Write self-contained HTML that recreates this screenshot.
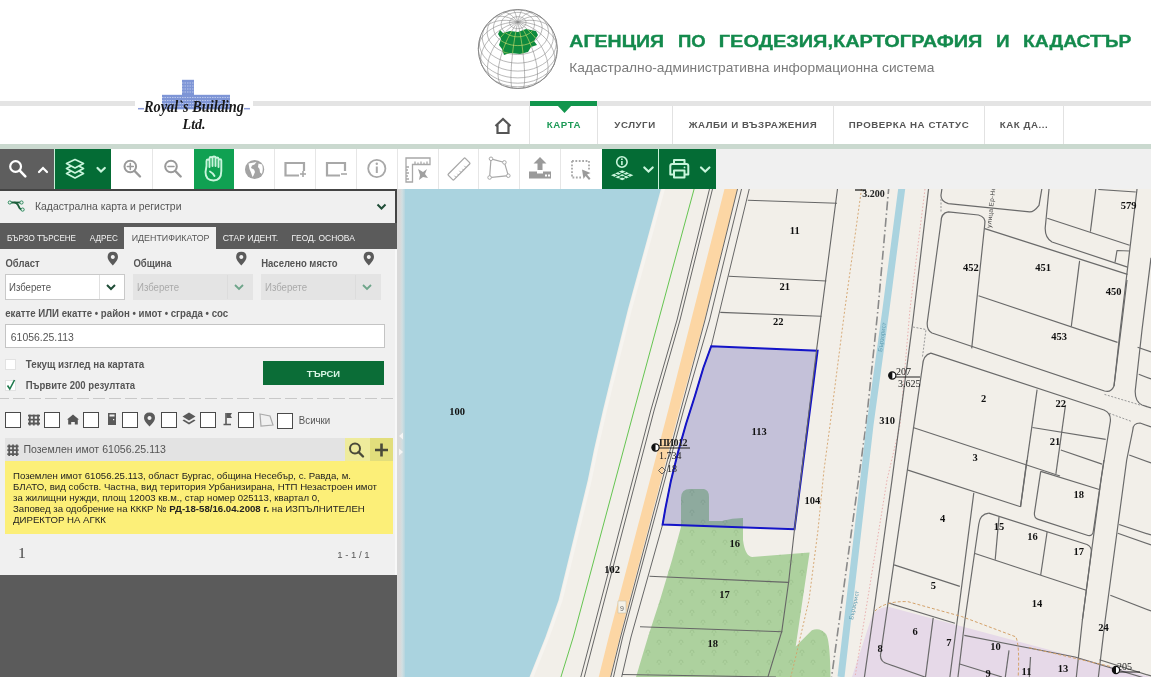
<!DOCTYPE html>
<html><head><meta charset="utf-8">
<style>
*{margin:0;padding:0;box-sizing:border-box}
html,body{width:1151px;height:677px;overflow:hidden;background:#fff;font-family:"Liberation Sans",sans-serif;position:relative}
.abs{position:absolute}
body>*{will-change:transform}
#hdrline{left:0;top:101px;width:1151px;height:5px;background:#e4e4e4}
#navline{left:0;top:144px;width:1151px;height:5px;background:#cad9cf}
#tbbg{left:0;top:149px;width:1151px;height:40px;background:#f0f0f0}
.nav{position:absolute;top:106px;height:38px;background:#fff;border-left:1px solid #e2e2e2;font-weight:bold;font-size:9.7px;letter-spacing:0.55px;color:#555;line-height:38px;text-align:center;white-space:nowrap}
.tb{position:absolute;top:149px;height:40px;background:#fff;border-right:1px solid #e4e4e4}
#panel{left:0;top:189px;width:397px;height:488px;background:#f0f0f0}
.lbl{position:absolute;font-weight:bold;font-size:9.5px;color:#555}
.sel{position:absolute;top:274px;width:120px;height:26px;border:1px solid #c9c9c9;background:#fff;font-size:9.5px;color:#555;line-height:24px;padding-left:3px}
.sel.dis{background:#e4e4e4;border-color:#e4e4e4;color:#aaa}
.sel .dv{position:absolute;right:24px;top:0;width:1px;height:24px;background:#e0e0e0}
.sel.dis .dv{background:#dcdcdc}
.cb{position:absolute;width:16px;height:16px;border:1px solid #4a4a4a;background:#fff}
.ytxt{font-size:9.5px;line-height:11.3px;color:#222}
</style></head><body>
<!-- header -->
<div class="abs" id="hdrline"></div>
<div class="abs" id="navline"></div>
<div class="abs" id="tbbg"></div>

<!-- Royal's logo -->
<div class="abs" style="left:135px;top:78px;width:118px;height:58px;background:#fff"></div>
<svg class="abs" style="left:130px;top:75px" width="130" height="62" viewBox="0 0 130 62">
  <rect x="52" y="4.8" width="12" height="15.2" fill="#7e95d6"/>
  <rect x="32" y="19.8" width="68" height="14.5" fill="#7e95d6"/>
  <g stroke="#d4dcf4" stroke-width="0.7" stroke-dasharray="1.5 1">
    <line x1="32" y1="22.5" x2="100" y2="22.5"/><line x1="32" y1="25.5" x2="100" y2="25.5"/><line x1="32" y1="28.5" x2="100" y2="28.5"/><line x1="32" y1="31.5" x2="100" y2="31.5"/>
    <line x1="52" y1="8" x2="64" y2="8"/><line x1="52" y1="11" x2="64" y2="11"/><line x1="52" y1="14" x2="64" y2="14"/><line x1="52" y1="17" x2="64" y2="17"/>
  </g>
  <line x1="8" y1="33.7" x2="14" y2="33.7" stroke="#8a9ad8" stroke-width="1.5"/>
  <line x1="114" y1="33.7" x2="120" y2="33.7" stroke="#8a9ad8" stroke-width="1.5"/>
  <text x="14" y="37.4" font-family="Liberation Serif" font-style="italic" font-weight="bold" font-size="16.5" fill="#1a1a1a" textLength="100" lengthAdjust="spacingAndGlyphs">Royal`s Building</text>
  <text x="52.6" y="54.3" font-family="Liberation Serif" font-style="italic" font-weight="bold" font-size="15" fill="#1a1a1a" textLength="23" lengthAdjust="spacingAndGlyphs">Ltd.</text>
</svg>

<!-- AGKK logo -->
<svg class="abs" style="left:476px;top:7px" width="84" height="84" viewBox="0 0 84 84">
  <defs><clipPath id="bgc"><path d="M24 23 L27 26 L34 24 L42 25 L50 22 L60 24 L62 28 L58 34 L61 38 L55 40 L52 45 L44 47 L34 46 L28 48 L26 42 L23 38 L25 32 L22 27 Z"/></clipPath></defs>
  <circle cx="41.799999999999955" cy="42" r="39.5" fill="#fff" stroke="#777" stroke-width="0.9"/>
  <path d="M46.9 81.2L47.3 80.9L47.7 80.1L48.1 78.9L48.3 77.4L48.5 75.4L48.6 73.1L48.7 70.4L48.6 67.5L48.5 64.2L48.3 60.7L48.1 57.0L47.7 53.2L47.3 49.2L46.9 45.1L46.4 41.0L45.8 36.9L45.2 32.9L44.6 29.0L43.9 25.2L43.2 21.6L42.5 18.2L41.8 15.1 M57.8 78.1L58.9 77.1L59.8 75.8L60.6 74.1L61.1 72.1L61.4 69.7L61.5 67.0L61.4 64.1L61.1 60.9L60.6 57.5L59.8 53.9L58.9 50.2L57.8 46.4L56.5 42.6L55.0 38.7L53.4 34.9L51.7 31.2L49.8 27.6L47.9 24.1L45.9 20.9L43.9 17.8L41.8 15.1 M68.0 71.6L69.4 69.9L70.6 68.0L71.4 65.8L71.9 63.3L72.1 60.6L71.9 57.7L71.4 54.6L70.6 51.3L69.4 48.0L68.0 44.6L66.3 41.2L64.3 37.8L62.0 34.4L59.6 31.1L56.9 28.0L54.1 24.9L51.2 22.1L48.1 19.5L45.0 17.1L41.8 15.1 M77.1 59.7L78.1 57.3L78.7 54.6L78.9 51.9L78.7 49.0L78.1 46.1L77.1 43.1L75.7 40.1L73.9 37.1L71.8 34.2L69.4 31.3L66.6 28.6L63.6 26.0L60.4 23.6L56.9 21.4L53.3 19.4L49.5 17.7L45.7 16.2L41.8 15.1 M81.3 42.0L81.1 39.2L80.4 36.4L79.4 33.7L77.9 31.0L76.0 28.5L73.8 26.2L71.2 24.0L68.2 22.0L65.0 20.2L61.5 18.7L57.9 17.4L54.0 16.4L50.0 15.6L45.9 15.2L41.8 15.1 M77.1 24.3L75.7 22.0L73.9 20.0L71.8 18.2L69.4 16.6L66.6 15.4L63.6 14.4L60.4 13.7L56.9 13.4L53.3 13.3L49.5 13.6L45.7 14.2L41.8 15.1 M66.3 11.1L64.3 10.2L62.0 9.6L59.6 9.3L56.9 9.4L54.1 9.8L51.2 10.6L48.1 11.8L45.0 13.3L41.8 15.1 M56.5 5.4L55.0 5.2L53.4 5.5L51.7 6.2L49.8 7.2L47.9 8.6L45.9 10.4L43.9 12.6L41.8 15.1 M46.4 2.9L45.8 3.5L45.2 4.4L44.6 5.8L43.9 7.6L43.2 9.7L42.5 12.2L41.8 15.1 M37.2 2.9L37.8 3.5L38.4 4.4L39.0 5.8L39.7 7.6L40.4 9.7L41.1 12.2L41.8 15.1 M27.1 5.4L28.6 5.2L30.2 5.5L31.9 6.2L33.8 7.2L35.7 8.6L37.7 10.4L39.7 12.6L41.8 15.1 M17.3 11.1L19.3 10.2L21.6 9.6L24.0 9.3L26.7 9.4L29.5 9.8L32.4 10.6L35.5 11.8L38.6 13.3L41.8 15.1 M6.5 24.3L7.9 22.0L9.7 20.0L11.8 18.2L14.2 16.6L17.0 15.4L20.0 14.4L23.2 13.7L26.7 13.4L30.3 13.3L34.1 13.6L37.9 14.2L41.8 15.1 M2.3 42.0L2.5 39.2L3.2 36.4L4.2 33.7L5.7 31.0L7.6 28.5L9.8 26.2L12.4 24.0L15.4 22.0L18.6 20.2L22.0 18.7L25.7 17.4L29.6 16.4L33.6 15.6L37.7 15.2L41.8 15.1 M6.5 59.7L5.5 57.3L4.9 54.6L4.7 51.9L4.9 49.0L5.5 46.1L6.5 43.1L7.9 40.1L9.7 37.1L11.8 34.2L14.2 31.3L17.0 28.6L20.0 26.0L23.2 23.6L26.7 21.4L30.3 19.4L34.1 17.7L37.9 16.2L41.8 15.1 M15.6 71.6L14.2 69.9L13.0 68.0L12.2 65.8L11.7 63.3L11.5 60.6L11.7 57.7L12.2 54.6L13.0 51.3L14.2 48.0L15.6 44.6L17.3 41.2L19.3 37.8L21.6 34.4L24.0 31.1L26.7 28.0L29.5 24.9L32.4 22.1L35.5 19.5L38.6 17.1L41.8 15.1 M25.8 78.1L24.7 77.1L23.8 75.8L23.0 74.1L22.5 72.1L22.2 69.7L22.0 67.0L22.2 64.1L22.5 60.9L23.0 57.5L23.8 53.9L24.7 50.2L25.8 46.4L27.1 42.6L28.6 38.7L30.2 34.9L31.9 31.2L33.8 27.6L35.7 24.1L37.7 20.9L39.7 17.8L41.8 15.1 M36.7 81.2L36.3 80.9L35.9 80.1L35.5 78.9L35.3 77.4L35.1 75.4L35.0 73.1L34.9 70.4L35.0 67.5L35.1 64.2L35.3 60.7L35.5 57.0L35.9 53.2L36.3 49.2L36.7 45.1L37.2 41.0L37.8 36.9L38.4 32.9L39.0 29.0L39.7 25.2L40.4 21.6L41.1 18.2L41.8 15.1 M41.8 81.4L46.1 81.2L50.3 80.5L54.3 79.5 M29.3 79.5L33.3 80.5L37.5 81.2L41.8 81.4 M41.8 79.8L46.7 79.5L51.6 78.8L56.2 77.5L60.6 75.8L64.6 73.7L68.2 71.2L71.2 68.3 M12.4 68.3L15.4 71.2L19.0 73.7L23.0 75.8L27.4 77.5L32.0 78.8L36.9 79.5L41.8 79.8 M41.8 76.2L47.2 75.9L52.4 75.1L57.5 73.8L62.2 71.9L66.5 69.6L70.4 66.9L73.7 63.8L76.4 60.4L78.4 56.8 M5.2 56.8L7.2 60.4L9.9 63.8L13.2 66.9L17.1 69.6L21.4 71.9L26.1 73.8L31.2 75.1L36.4 75.9L41.8 76.2 M41.8 70.9L47.3 70.6L52.7 69.8L57.9 68.4L62.7 66.5L67.2 64.1L71.2 61.3L74.5 58.2L77.3 54.7L79.4 50.9L80.7 47.0L81.3 43.0 M2.3 43.0L2.9 47.0L4.2 50.9L6.3 54.7L9.1 58.2L12.4 61.3L16.4 64.1L20.9 66.5L25.7 68.4L30.9 69.8L36.3 70.6L41.8 70.9 M41.8 64.1L47.2 63.8L52.4 63.0L57.5 61.7L62.2 59.8L66.5 57.5L70.4 54.8L73.7 51.7L76.4 48.3L78.4 44.6L79.7 40.8L80.3 36.9L80.1 33.0L79.1 29.1 M4.5 29.1L3.5 33.0L3.3 36.9L3.9 40.8L5.2 44.6L7.2 48.3L9.9 51.7L13.2 54.8L17.1 57.5L21.4 59.8L26.1 61.7L31.2 63.0L36.4 63.8L41.8 64.1 M41.8 56.2L46.7 55.9L51.6 55.1L56.2 53.9L60.6 52.2L64.6 50.1L68.2 47.6L71.2 44.7L73.7 41.6L75.6 38.2L76.8 34.7L77.3 31.1L77.1 27.5L76.2 23.9L74.7 20.5L72.5 17.2 M11.1 17.2L8.9 20.5L7.4 23.9L6.5 27.5L6.3 31.1L6.8 34.7L8.0 38.2L9.9 41.6L12.4 44.7L15.4 47.6L19.0 50.1L23.0 52.2L27.4 53.9L32.0 55.1L36.9 55.9L41.8 56.2 M41.8 47.5L46.1 47.3L50.3 46.6L54.3 45.6L58.1 44.1L61.5 42.2L64.6 40.1L67.2 37.6L69.4 34.9L71.0 32.0L72.0 28.9L72.5 25.8L72.3 22.7L71.6 19.6L70.3 16.6L68.4 13.8L66.0 11.2L63.1 8.9L59.8 6.9 M23.8 6.9L20.5 8.9L17.6 11.2L15.2 13.8L13.3 16.6L12.0 19.6L11.3 22.7L11.1 25.8L11.6 28.9L12.6 32.0L14.2 34.9L16.4 37.6L19.0 40.1L22.1 42.2L25.5 44.1L29.3 45.6L33.3 46.6L37.5 47.3L41.8 47.5 M41.8 38.6L45.2 38.4L48.5 37.9L51.7 37.0L54.7 35.9L57.4 34.4L59.9 32.7L62.0 30.7L63.7 28.6L64.9 26.3L65.7 23.9L66.1 21.4L66.0 18.9L65.4 16.5L64.3 14.1L62.9 11.9L61.0 9.8L58.7 8.0L56.1 6.4L53.2 5.1L50.1 4.1L46.9 3.4L43.5 3.0L40.1 3.0L36.7 3.4L33.5 4.1L30.4 5.1L27.5 6.4L24.9 8.0L22.6 9.8L20.7 11.9L19.3 14.1L18.2 16.5L17.6 18.9L17.5 21.4L17.9 23.9L18.7 26.3L19.9 28.6L21.6 30.7L23.7 32.7L26.2 34.4L28.9 35.9L31.9 37.0L35.1 37.9L38.4 38.4L41.8 38.6 M41.8 29.8L44.1 29.7L46.4 29.3L48.6 28.7L50.6 27.9L52.5 26.9L54.2 25.8L55.6 24.4L56.8 22.9L57.7 21.4L58.2 19.7L58.5 18.0L58.4 16.3L58.0 14.6L57.3 13.0L56.3 11.5L55.0 10.1L53.4 8.8L51.6 7.7L49.6 6.8L47.5 6.1L45.3 5.6L43.0 5.4L40.6 5.4L38.3 5.6L36.1 6.1L34.0 6.8L32.0 7.7L30.2 8.8L28.6 10.1L27.3 11.5L26.3 13.0L25.6 14.6L25.2 16.3L25.1 18.0L25.4 19.7L25.9 21.4L26.8 22.9L28.0 24.4L29.4 25.8L31.1 26.9L33.0 27.9L35.0 28.7L37.2 29.3L39.5 29.7L41.8 29.8 M41.8 21.7L42.9 21.6L44.1 21.4L45.1 21.1L46.2 20.7L47.1 20.3L47.9 19.7L48.6 19.0L49.2 18.3L49.6 17.5L49.9 16.7L50.0 15.9L50.0 15.0L49.8 14.2L49.4 13.4L48.9 12.6L48.3 12.0L47.5 11.3L46.6 10.8L45.7 10.3L44.6 10.0L43.5 9.8L42.4 9.7L41.2 9.7L40.1 9.8L39.0 10.0L37.9 10.3L37.0 10.8L36.1 11.3L35.3 12.0L34.7 12.6L34.2 13.4L33.8 14.2L33.6 15.0L33.6 15.9L33.7 16.7L34.0 17.5L34.4 18.3L35.0 19.0L35.7 19.7L36.5 20.3L37.4 20.7L38.5 21.1L39.5 21.4L40.7 21.6L41.8 21.7" fill="none" stroke="#8a8a8a" stroke-width="0.6"/>
  <path d="M24 23 L27 26 L34 24 L42 25 L50 22 L60 24 L62 28 L58 34 L61 38 L55 40 L52 45 L44 47 L34 46 L28 48 L26 42 L23 38 L25 32 L22 27 Z" fill="#0e8a3e"/>
  <path d="M46.9 81.2L47.3 80.9L47.7 80.1L48.1 78.9L48.3 77.4L48.5 75.4L48.6 73.1L48.7 70.4L48.6 67.5L48.5 64.2L48.3 60.7L48.1 57.0L47.7 53.2L47.3 49.2L46.9 45.1L46.4 41.0L45.8 36.9L45.2 32.9L44.6 29.0L43.9 25.2L43.2 21.6L42.5 18.2L41.8 15.1 M57.8 78.1L58.9 77.1L59.8 75.8L60.6 74.1L61.1 72.1L61.4 69.7L61.5 67.0L61.4 64.1L61.1 60.9L60.6 57.5L59.8 53.9L58.9 50.2L57.8 46.4L56.5 42.6L55.0 38.7L53.4 34.9L51.7 31.2L49.8 27.6L47.9 24.1L45.9 20.9L43.9 17.8L41.8 15.1 M68.0 71.6L69.4 69.9L70.6 68.0L71.4 65.8L71.9 63.3L72.1 60.6L71.9 57.7L71.4 54.6L70.6 51.3L69.4 48.0L68.0 44.6L66.3 41.2L64.3 37.8L62.0 34.4L59.6 31.1L56.9 28.0L54.1 24.9L51.2 22.1L48.1 19.5L45.0 17.1L41.8 15.1 M77.1 59.7L78.1 57.3L78.7 54.6L78.9 51.9L78.7 49.0L78.1 46.1L77.1 43.1L75.7 40.1L73.9 37.1L71.8 34.2L69.4 31.3L66.6 28.6L63.6 26.0L60.4 23.6L56.9 21.4L53.3 19.4L49.5 17.7L45.7 16.2L41.8 15.1 M81.3 42.0L81.1 39.2L80.4 36.4L79.4 33.7L77.9 31.0L76.0 28.5L73.8 26.2L71.2 24.0L68.2 22.0L65.0 20.2L61.5 18.7L57.9 17.4L54.0 16.4L50.0 15.6L45.9 15.2L41.8 15.1 M77.1 24.3L75.7 22.0L73.9 20.0L71.8 18.2L69.4 16.6L66.6 15.4L63.6 14.4L60.4 13.7L56.9 13.4L53.3 13.3L49.5 13.6L45.7 14.2L41.8 15.1 M66.3 11.1L64.3 10.2L62.0 9.6L59.6 9.3L56.9 9.4L54.1 9.8L51.2 10.6L48.1 11.8L45.0 13.3L41.8 15.1 M56.5 5.4L55.0 5.2L53.4 5.5L51.7 6.2L49.8 7.2L47.9 8.6L45.9 10.4L43.9 12.6L41.8 15.1 M46.4 2.9L45.8 3.5L45.2 4.4L44.6 5.8L43.9 7.6L43.2 9.7L42.5 12.2L41.8 15.1 M37.2 2.9L37.8 3.5L38.4 4.4L39.0 5.8L39.7 7.6L40.4 9.7L41.1 12.2L41.8 15.1 M27.1 5.4L28.6 5.2L30.2 5.5L31.9 6.2L33.8 7.2L35.7 8.6L37.7 10.4L39.7 12.6L41.8 15.1 M17.3 11.1L19.3 10.2L21.6 9.6L24.0 9.3L26.7 9.4L29.5 9.8L32.4 10.6L35.5 11.8L38.6 13.3L41.8 15.1 M6.5 24.3L7.9 22.0L9.7 20.0L11.8 18.2L14.2 16.6L17.0 15.4L20.0 14.4L23.2 13.7L26.7 13.4L30.3 13.3L34.1 13.6L37.9 14.2L41.8 15.1 M2.3 42.0L2.5 39.2L3.2 36.4L4.2 33.7L5.7 31.0L7.6 28.5L9.8 26.2L12.4 24.0L15.4 22.0L18.6 20.2L22.0 18.7L25.7 17.4L29.6 16.4L33.6 15.6L37.7 15.2L41.8 15.1 M6.5 59.7L5.5 57.3L4.9 54.6L4.7 51.9L4.9 49.0L5.5 46.1L6.5 43.1L7.9 40.1L9.7 37.1L11.8 34.2L14.2 31.3L17.0 28.6L20.0 26.0L23.2 23.6L26.7 21.4L30.3 19.4L34.1 17.7L37.9 16.2L41.8 15.1 M15.6 71.6L14.2 69.9L13.0 68.0L12.2 65.8L11.7 63.3L11.5 60.6L11.7 57.7L12.2 54.6L13.0 51.3L14.2 48.0L15.6 44.6L17.3 41.2L19.3 37.8L21.6 34.4L24.0 31.1L26.7 28.0L29.5 24.9L32.4 22.1L35.5 19.5L38.6 17.1L41.8 15.1 M25.8 78.1L24.7 77.1L23.8 75.8L23.0 74.1L22.5 72.1L22.2 69.7L22.0 67.0L22.2 64.1L22.5 60.9L23.0 57.5L23.8 53.9L24.7 50.2L25.8 46.4L27.1 42.6L28.6 38.7L30.2 34.9L31.9 31.2L33.8 27.6L35.7 24.1L37.7 20.9L39.7 17.8L41.8 15.1 M36.7 81.2L36.3 80.9L35.9 80.1L35.5 78.9L35.3 77.4L35.1 75.4L35.0 73.1L34.9 70.4L35.0 67.5L35.1 64.2L35.3 60.7L35.5 57.0L35.9 53.2L36.3 49.2L36.7 45.1L37.2 41.0L37.8 36.9L38.4 32.9L39.0 29.0L39.7 25.2L40.4 21.6L41.1 18.2L41.8 15.1 M41.8 81.4L46.1 81.2L50.3 80.5L54.3 79.5 M29.3 79.5L33.3 80.5L37.5 81.2L41.8 81.4 M41.8 79.8L46.7 79.5L51.6 78.8L56.2 77.5L60.6 75.8L64.6 73.7L68.2 71.2L71.2 68.3 M12.4 68.3L15.4 71.2L19.0 73.7L23.0 75.8L27.4 77.5L32.0 78.8L36.9 79.5L41.8 79.8 M41.8 76.2L47.2 75.9L52.4 75.1L57.5 73.8L62.2 71.9L66.5 69.6L70.4 66.9L73.7 63.8L76.4 60.4L78.4 56.8 M5.2 56.8L7.2 60.4L9.9 63.8L13.2 66.9L17.1 69.6L21.4 71.9L26.1 73.8L31.2 75.1L36.4 75.9L41.8 76.2 M41.8 70.9L47.3 70.6L52.7 69.8L57.9 68.4L62.7 66.5L67.2 64.1L71.2 61.3L74.5 58.2L77.3 54.7L79.4 50.9L80.7 47.0L81.3 43.0 M2.3 43.0L2.9 47.0L4.2 50.9L6.3 54.7L9.1 58.2L12.4 61.3L16.4 64.1L20.9 66.5L25.7 68.4L30.9 69.8L36.3 70.6L41.8 70.9 M41.8 64.1L47.2 63.8L52.4 63.0L57.5 61.7L62.2 59.8L66.5 57.5L70.4 54.8L73.7 51.7L76.4 48.3L78.4 44.6L79.7 40.8L80.3 36.9L80.1 33.0L79.1 29.1 M4.5 29.1L3.5 33.0L3.3 36.9L3.9 40.8L5.2 44.6L7.2 48.3L9.9 51.7L13.2 54.8L17.1 57.5L21.4 59.8L26.1 61.7L31.2 63.0L36.4 63.8L41.8 64.1 M41.8 56.2L46.7 55.9L51.6 55.1L56.2 53.9L60.6 52.2L64.6 50.1L68.2 47.6L71.2 44.7L73.7 41.6L75.6 38.2L76.8 34.7L77.3 31.1L77.1 27.5L76.2 23.9L74.7 20.5L72.5 17.2 M11.1 17.2L8.9 20.5L7.4 23.9L6.5 27.5L6.3 31.1L6.8 34.7L8.0 38.2L9.9 41.6L12.4 44.7L15.4 47.6L19.0 50.1L23.0 52.2L27.4 53.9L32.0 55.1L36.9 55.9L41.8 56.2 M41.8 47.5L46.1 47.3L50.3 46.6L54.3 45.6L58.1 44.1L61.5 42.2L64.6 40.1L67.2 37.6L69.4 34.9L71.0 32.0L72.0 28.9L72.5 25.8L72.3 22.7L71.6 19.6L70.3 16.6L68.4 13.8L66.0 11.2L63.1 8.9L59.8 6.9 M23.8 6.9L20.5 8.9L17.6 11.2L15.2 13.8L13.3 16.6L12.0 19.6L11.3 22.7L11.1 25.8L11.6 28.9L12.6 32.0L14.2 34.9L16.4 37.6L19.0 40.1L22.1 42.2L25.5 44.1L29.3 45.6L33.3 46.6L37.5 47.3L41.8 47.5 M41.8 38.6L45.2 38.4L48.5 37.9L51.7 37.0L54.7 35.9L57.4 34.4L59.9 32.7L62.0 30.7L63.7 28.6L64.9 26.3L65.7 23.9L66.1 21.4L66.0 18.9L65.4 16.5L64.3 14.1L62.9 11.9L61.0 9.8L58.7 8.0L56.1 6.4L53.2 5.1L50.1 4.1L46.9 3.4L43.5 3.0L40.1 3.0L36.7 3.4L33.5 4.1L30.4 5.1L27.5 6.4L24.9 8.0L22.6 9.8L20.7 11.9L19.3 14.1L18.2 16.5L17.6 18.9L17.5 21.4L17.9 23.9L18.7 26.3L19.9 28.6L21.6 30.7L23.7 32.7L26.2 34.4L28.9 35.9L31.9 37.0L35.1 37.9L38.4 38.4L41.8 38.6 M41.8 29.8L44.1 29.7L46.4 29.3L48.6 28.7L50.6 27.9L52.5 26.9L54.2 25.8L55.6 24.4L56.8 22.9L57.7 21.4L58.2 19.7L58.5 18.0L58.4 16.3L58.0 14.6L57.3 13.0L56.3 11.5L55.0 10.1L53.4 8.8L51.6 7.7L49.6 6.8L47.5 6.1L45.3 5.6L43.0 5.4L40.6 5.4L38.3 5.6L36.1 6.1L34.0 6.8L32.0 7.7L30.2 8.8L28.6 10.1L27.3 11.5L26.3 13.0L25.6 14.6L25.2 16.3L25.1 18.0L25.4 19.7L25.9 21.4L26.8 22.9L28.0 24.4L29.4 25.8L31.1 26.9L33.0 27.9L35.0 28.7L37.2 29.3L39.5 29.7L41.8 29.8 M41.8 21.7L42.9 21.6L44.1 21.4L45.1 21.1L46.2 20.7L47.1 20.3L47.9 19.7L48.6 19.0L49.2 18.3L49.6 17.5L49.9 16.7L50.0 15.9L50.0 15.0L49.8 14.2L49.4 13.4L48.9 12.6L48.3 12.0L47.5 11.3L46.6 10.8L45.7 10.3L44.6 10.0L43.5 9.8L42.4 9.7L41.2 9.7L40.1 9.8L39.0 10.0L37.9 10.3L37.0 10.8L36.1 11.3L35.3 12.0L34.7 12.6L34.2 13.4L33.8 14.2L33.6 15.0L33.6 15.9L33.7 16.7L34.0 17.5L34.4 18.3L35.0 19.0L35.7 19.7L36.5 20.3L37.4 20.7L38.5 21.1L39.5 21.4L40.7 21.6L41.8 21.7" fill="none" stroke="#d6e070" stroke-width="0.6" clip-path="url(#bgc)"/>
</svg>
<svg class="abs" style="left:560px;top:20px" width="591" height="60" viewBox="560 20 591 60">
  <g font-family="Liberation Sans" font-weight="bold" font-size="17.4" fill="#148a4d" stroke="#148a4d" stroke-width="0.35">
    <text x="569.3" y="46.9" textLength="94.7" lengthAdjust="spacingAndGlyphs">АГЕНЦИЯ</text>
    <text x="678" y="46.9" textLength="27.7" lengthAdjust="spacingAndGlyphs">ПО</text>
    <text x="718.8" y="46.9" textLength="263.6" lengthAdjust="spacingAndGlyphs">ГЕОДЕЗИЯ,КАРТОГРАФИЯ</text>
    <text x="995.9" y="46.9" textLength="13.6" lengthAdjust="spacingAndGlyphs">И</text>
    <text x="1023" y="46.9" textLength="108.4" lengthAdjust="spacingAndGlyphs">КАДАСТЪР</text>
  </g>
  <text x="569.3" y="72.2" font-family="Liberation Sans" font-size="13.6" fill="#7a7a7a" textLength="365" lengthAdjust="spacingAndGlyphs">Кадастрално-административна информационна система</text>
</svg>

<!-- nav -->
<div class="nav" style="left:478px;width:52px;border-left:none"><svg width="20" height="18" viewBox="0 0 20 18" style="position:absolute;left:15px;top:11px"><path d="M2.5 9 L10 2 L17.5 9 M4.5 7.5 V16 H15.5 V7.5" fill="none" stroke="#555" stroke-width="2.2" stroke-linejoin="miter"/></svg></div>
<div class="nav" style="left:529px;width:69px;color:#1d9a57">КАРТА</div>
<div class="abs" style="left:530px;top:101px;width:67px;height:5px;background:#12964d"></div>
<svg class="abs" style="left:557px;top:105px" width="15" height="9"><path d="M0 0 H15 L7.5 8 Z" fill="#12964d"/></svg>
<div class="nav" style="left:597px;width:75px">УСЛУГИ</div>
<div class="nav" style="left:672px;width:161px">ЖАЛБИ И ВЪЗРАЖЕНИЯ</div>
<div class="nav" style="left:833px;width:151px">ПРОВЕРКА НА СТАТУС</div>
<div class="nav" style="left:984px;width:80px;border-right:1px solid #e2e2e2">КАК ДА...</div>

<!-- TOOLBAR -->
<svg class="abs" style="left:0;top:149px" width="720" height="40" viewBox="0 0 720 40">
  <rect x="0" y="0" width="54" height="40" fill="#5e5e5e"/>
  <rect x="54" y="0" width="1" height="40" fill="#c9f0d8"/>
  <rect x="55" y="0" width="56" height="40" fill="#046c35"/>
  <rect x="111" y="0" width="491" height="40" fill="#fff"/>
  <rect x="194" y="0" width="40" height="40" fill="#10a152"/>
  <g fill="#e6e6e6">
    <rect x="152" y="0" width="1" height="40"/><rect x="274" y="0" width="1" height="40"/><rect x="315" y="0" width="1" height="40"/>
    <rect x="356" y="0" width="1" height="40"/><rect x="397" y="0" width="1" height="40"/><rect x="438" y="0" width="1" height="40"/>
    <rect x="478" y="0" width="1" height="40"/><rect x="519" y="0" width="1" height="40"/><rect x="560" y="0" width="1" height="40"/>
  </g>
  <rect x="602" y="0" width="56" height="40" fill="#046c35"/>
  <rect x="658" y="0" width="1" height="40" fill="#c9f0d8"/>
  <rect x="659" y="0" width="57" height="40" fill="#046c35"/>
  <!-- search -->
  <g stroke="#fff" stroke-width="2.2" fill="none" stroke-linecap="round">
    <circle cx="15.6" cy="17.5" r="5.4"/>
    <line x1="19.8" y1="21.7" x2="25.3" y2="27.3" stroke-width="2.6"/>
    <path d="M39 23 L43 19 L47 23"/>
  </g>
  <!-- layers -->
  <g stroke="#c9f5dc" stroke-width="1.7" fill="#046c35" stroke-linejoin="round">
    <path d="M66.5 24.5 L75 20 L83.5 24.5 L75 29 Z"/>
    <path d="M66.5 19.5 L75 15 L83.5 19.5 L75 24 Z"/>
    <path d="M66.5 14.5 L75 10.5 L83.5 14.5 L75 19 Z"/>
  </g>
  <path d="M97.5 19 L101 22.5 L104.8 19" stroke="#c9f5dc" stroke-width="2.2" fill="none" stroke-linecap="round"/>
  <!-- zoom in/out -->
  <g stroke="#999" stroke-width="2" fill="none" stroke-linecap="round">
    <circle cx="130.3" cy="17.5" r="5.8"/>
    <line x1="134.6" y1="22" x2="140" y2="27.5" stroke-width="2.4"/>
    <line x1="127.3" y1="17.5" x2="133.3" y2="17.5" stroke-width="1.5"/>
    <line x1="130.3" y1="14.5" x2="130.3" y2="20.5" stroke-width="1.5"/>
    <circle cx="171" cy="17.5" r="5.8"/>
    <line x1="175.3" y1="22" x2="180.7" y2="27.5" stroke-width="2.4"/>
    <line x1="168" y1="17.5" x2="174" y2="17.5" stroke-width="1.5"/>
  </g>
  <!-- hand -->
  <path d="M206.5 17 V12 Q206.5 10.5 208 10.5 Q209.5 10.5 209.5 12 V9.5 Q209.5 8 211 8 Q212.5 8 212.5 9.5 V9 Q212.5 7.5 214 7.5 Q215.5 7.5 215.5 9 V10 Q215.5 8.5 217 8.5 Q218.5 8.5 218.5 10 V11.5 Q218.5 10.2 220 10.2 Q221.3 10.2 221.3 11.5 V22 Q221.3 31.5 213.5 31.5 Q205.5 31.5 205.5 23 Z M209.5 12 V18 M212.5 9.5 V17 M215.5 9 V17 M218.5 11 V18 M210 22.5 Q213 24 214.5 27" stroke="#c9f5dc" stroke-width="1.9" fill="none" stroke-linecap="round" stroke-linejoin="round"/>
  <!-- globe -->
  <circle cx="254.6" cy="20.5" r="9.6" fill="#a3a3a3"/>
  <path d="M248.5 14.5 L256.5 13 L254.5 15.5 L252 16.5 L251 19 L254 20.5 L255 23 L253.5 26.5 L252.5 28 L251 23.5 L249.5 20 Z M258.5 14.5 L262 15.5 Q263.5 19 262 25 L260 23.5 L259.5 20 L258 18 Z" fill="#fff"/>
  <!-- rect + / - -->
  <g stroke="#a8a8a8" stroke-width="2.2" fill="none">
    <path d="M299 26.5 H285.5 V14 H304 V22"/>
    <path d="M340 26.5 H327 V14 H345 V22"/>
  </g>
  <g stroke="#a8a8a8" stroke-width="1.6">
    <line x1="300" y1="25" x2="306" y2="25"/><line x1="303" y1="22" x2="303" y2="28"/>
    <line x1="341" y1="25" x2="347" y2="25"/>
  </g>
  <!-- info -->
  <circle cx="376.8" cy="19.5" r="8.6" stroke="#a8a8a8" stroke-width="1.8" fill="none"/>
  <rect x="375.8" y="17.5" width="2" height="6.5" fill="#a8a8a8"/><circle cx="376.8" cy="14.7" r="1.2" fill="#a8a8a8"/>
  <!-- area measure -->
  <g stroke="#a8a8a8" stroke-width="1.3" fill="none">
    <path d="M406 9 H430 V15.5 H412.5 V33 H406 Z"/>
    <path d="M415 15.5 V12.5 M418 15.5 V13.5 M421 15.5 V12.5 M424 15.5 V13.5 M427 15.5 V12.5 M406 18 H409 M406 21 H408 M406 24 H409 M406 27 H408 M406 30 H409"/>
  </g>
  <path d="M418 20 L423 23 L427 20 L425 25 L428 29 L423 28 L419 31 L420 26 Z" fill="#a0a0a0"/>
  <!-- ruler -->
  <g transform="translate(459,20) rotate(-45)">
    <rect x="-12" y="-4" width="24" height="8" rx="1" stroke="#a8a8a8" stroke-width="1.3" fill="none"/>
    <path d="M-8 4 V1.5 M-4.5 4 V2.3 M-1 4 V1.5 M2.5 4 V2.3 M6 4 V1.5" stroke="#a8a8a8" stroke-width="0.9"/>
  </g>
  <!-- polygon -->
  <path d="M491 9.8 L504.4 13.4 L508.3 26.7 L489.6 28.5 Z" stroke="#a8a8a8" stroke-width="1.2" fill="none"/>
  <g fill="#fff" stroke="#a8a8a8" stroke-width="1"><circle cx="491" cy="9.8" r="1.8"/><circle cx="504.4" cy="13.4" r="1.8"/><circle cx="508.3" cy="26.7" r="1.8"/><circle cx="489.6" cy="28.5" r="1.8"/></g>
  <!-- upload -->
  <path d="M540 8 L546.5 14.5 H542.5 V21 H537.5 V14.5 H533.5 Z" fill="#9a9a9a"/>
  <path d="M529 22.5 H537 V24.5 H543 V22.5 H551 V29.5 H529 Z" fill="#9a9a9a"/>
  <rect x="545" y="25.5" width="2" height="2" fill="#fff"/><rect x="548" y="25.5" width="2" height="2" fill="#fff"/>
  <!-- select -->
  <path d="M572 12 H589 V21 M572 12 V28.5 H581" stroke="#a8a8a8" stroke-width="1.8" stroke-dasharray="1.8 1.6" fill="none"/>
  <path d="M582 20.5 L590.5 24 L587 25.5 L590.5 29.5 L589 31 L585.5 27 L583.5 30 Z" fill="#9a9a9a"/>
  <!-- info layers -->
  <circle cx="621.9" cy="13" r="5.2" stroke="#c9f5dc" stroke-width="1.6" fill="none"/>
  <rect x="621.1" y="12" width="1.6" height="4" fill="#c9f5dc"/><circle cx="621.9" cy="10.2" r="0.9" fill="#c9f5dc"/>
  <g fill="#c9f5dc">
    <path d="M611 26.3 L622.2 21.3 L633.4 26.3 L622.2 31.3 Z"/>
  </g>
  <g stroke="#046c35" stroke-width="1">
    <path d="M614.7 24.7 L626 29.6 M618.4 23 L629.7 28 M614.7 28 L626 23 M618.4 29.6 L629.7 24.7"/>
  </g>
  <path d="M644.3 18.5 L648.5 22.5 L652.7 18.5" stroke="#c9f5dc" stroke-width="2.2" fill="none" stroke-linecap="round"/>
  <!-- printer -->
  <g stroke="#c9f5dc" stroke-width="2" fill="none" stroke-linejoin="round">
    <path d="M674 15 V11 H684.5 V15"/>
    <path d="M673.5 25.5 H670.3 V17 Q670.3 15 672.3 15 H686.3 Q688.3 15 688.3 17 V25.5 H685"/>
    <rect x="674" y="21.5" width="10.5" height="7"/>
  </g>
  <circle cx="684.5" cy="18.4" r="0.9" fill="#c9f5dc"/>
  <path d="M701 18.5 L705.2 22.5 L709.4 18.5" stroke="#c9f5dc" stroke-width="2.2" fill="none" stroke-linecap="round"/>
</svg>


<!-- PANEL -->
<div class="abs" id="panel"></div>
<div class="abs" style="left:0;top:189px;width:397px;height:34px;background:#444;"></div>
<div class="abs" style="left:0;top:191px;width:395px;height:32px;background:#f0f0f0;"></div>
<svg class="abs" style="left:7px;top:199px" width="18" height="14" viewBox="0 0 18 14">
  <path d="M3 3.5 H7.5 Q9.5 3.5 11 6 L12.5 9 Q13.5 10.5 15 10.5" stroke="#1b5e3a" stroke-width="1.8" fill="none"/>
  <path d="M7.5 3.5 H13.5" stroke="#1b5e3a" stroke-width="1.8"/>
  <circle cx="2.8" cy="3.5" r="1.6" stroke="#2b8a5c" stroke-width="1" fill="#f0f0f0"/>
  <circle cx="14.5" cy="3.5" r="1.6" stroke="#2b8a5c" stroke-width="1" fill="#f0f0f0"/>
  <circle cx="15.6" cy="10.6" r="1.6" stroke="#2b8a5c" stroke-width="1" fill="#f0f0f0"/>
</svg>
<div class="abs" style="left:35px;top:200px;font-size:10.4px;color:#555;line-height:13px;white-space:nowrap">Кадастрална карта и регистри</div>
<svg class="abs" style="left:376px;top:203px" width="11" height="8"><path d="M1.5 1.5 L5.5 5.5 L9.5 1.5" stroke="#1f4d37" stroke-width="2" fill="none"/></svg>
<!-- tabs -->
<div class="abs" style="left:0;top:223px;width:397px;height:26px;background:#5b5b5b"></div>
<div class="abs" style="left:124px;top:227px;width:92px;height:22px;background:#f0f0f0"></div>
<div class="abs" style="left:395px;top:249px;width:2px;height:326px;background:#f8f8f8"></div>
<svg class="abs" style="left:0;top:223px" width="397" height="26" viewBox="0 223 397 26">
  <g font-family="Liberation Sans" font-size="9.2" fill="#f4f4f4">
    <text x="7" y="241.3" textLength="69" lengthAdjust="spacingAndGlyphs">БЪРЗО ТЪРСЕНЕ</text>
    <text x="89.8" y="241.3" textLength="28" lengthAdjust="spacingAndGlyphs">АДРЕС</text>
    <text x="131.7" y="241.3" textLength="77.8" lengthAdjust="spacingAndGlyphs" fill="#555">ИДЕНТИФИКАТОР</text>
    <text x="222.7" y="241.3" textLength="55.5" lengthAdjust="spacingAndGlyphs">СТАР ИДЕНТ.</text>
    <text x="291.5" y="241.3" textLength="63.3" lengthAdjust="spacingAndGlyphs">ГЕОД. ОСНОВА</text>
  </g>
</svg>
<!-- form -->



<svg class="abs" style="left:0;top:250px" width="397" height="18">
  <g fill="#5a5a5a">
    <path id="pin" d="M112.8 1.8 Q118 1.8 118 7 Q118 10 112.8 15.5 Q107.6 10 107.6 7 Q107.6 1.8 112.8 1.8 Z M112.8 5 A2 2 0 1 0 112.81 5 Z" fill-rule="evenodd"/>
    <use href="#pin" x="128.5"/>
    <use href="#pin" x="256"/>
  </g>
</svg>
<div class="sel" style="left:5px"><div class="dv"></div><svg style="position:absolute;right:8px;top:9px" width="10" height="7"><path d="M1 1 L5 5 L9 1" stroke="#1f4d37" stroke-width="2" fill="none"/></svg></div>
<div class="sel dis" style="left:133px"><div class="dv"></div><svg style="position:absolute;right:8px;top:9px" width="10" height="7"><path d="M1 1 L5 5 L9 1" stroke="#6ea58a" stroke-width="1.8" fill="none"/></svg></div>
<div class="sel dis" style="left:261px"><div class="dv"></div><svg style="position:absolute;right:8px;top:9px" width="10" height="7"><path d="M1 1 L5 5 L9 1" stroke="#6ea58a" stroke-width="1.8" fill="none"/></svg></div>

<div class="abs" style="left:5px;top:324px;width:380px;height:24px;border:1px solid #c4c4c4;background:#fff;font-size:10.4px;color:#555;line-height:22px;padding-left:5px;letter-spacing:0.1px"></div>
<div class="abs" style="left:5px;top:359px;width:11px;height:11px;border:1px solid #e2e2e2;background:#fff"></div>
<div class="abs" style="left:5px;top:380px;width:11px;height:11px;border:1px solid #e2e2e2;background:#fff"></div>
<svg class="abs" style="left:5px;top:378px" width="12" height="13"><path d="M2.5 7.5 L4.8 11 L9.5 2" stroke="#1f7a4d" stroke-width="1.6" fill="none"/></svg>


<div class="abs" style="left:263px;top:361px;width:121px;height:24px;background:#0b6d37;color:#fff;font-weight:bold;font-size:9.5px;line-height:24px;text-align:center"></div>
<svg class="abs" style="left:0;top:397px" width="395" height="3"><line x1="0" y1="1.5" x2="395" y2="1.5" stroke="#c8c8c8" stroke-width="1" stroke-dasharray="12 4" stroke-dashoffset="3"/></svg>
<!-- icon row -->
<div class="cb" style="left:5px;top:412px"></div>
<div class="cb" style="left:44px;top:412px"></div>
<div class="cb" style="left:83px;top:412px"></div>
<div class="cb" style="left:122px;top:412px"></div>
<div class="cb" style="left:161px;top:412px"></div>
<div class="cb" style="left:200px;top:412px"></div>
<div class="cb" style="left:238px;top:412px"></div>
<div class="cb" style="left:277px;top:413px"></div>
<svg class="abs" style="left:0;top:408px" width="340" height="26">
  <g stroke="#5a5a5a" stroke-width="1.8">
    <path d="M29.8 6.5 V17.5 M33.8 6.5 V17.5 M38 6.5 V17.5 M28 7.7 H40 M28 11.6 H40 M28 15.5 H40"/>
  </g>
  <path d="M73 6.5 L79 11.5 H77.8 V16.5 H74.8 V14 H71.2 V16.5 H68.2 V11.5 H67 Z" fill="#555"/>
  <rect x="108" y="5" width="8" height="12" fill="#5a5a5a"/><rect x="109.5" y="6.5" width="5" height="2" fill="#f0f0f0"/><rect x="113" y="11" width="1.2" height="1.2" fill="#f0f0f0"/>
  <path d="M149.5 4.5 Q155 4.5 155 10 Q155 13 149.5 18.5 Q144 13 144 10 Q144 4.5 149.5 4.5 Z M149.5 8 A2 2 0 1 0 149.51 8 Z" fill="#5a5a5a" fill-rule="evenodd"/>
  <path d="M189 4.5 L195.5 8.5 L189 12.5 L182.5 8.5 Z" fill="#5a5a5a"/>
  <path d="M184 11.5 L189 14.5 L194 11.5 L195.5 12.5 L189 16.5 L182.5 12.5 Z" fill="#5a5a5a"/>
  <path d="M226 5 V16 M223.5 16.5 H231" stroke="#5a5a5a" stroke-width="1.6"/>
  <path d="M226.5 5 H232 L230.5 7.5 L232 10 H226.5 Z" fill="#5a5a5a"/>
  <path d="M260 6 L270 8 L273 17 L261 18 Z" stroke="#aaa" stroke-width="1.2" fill="none"/>
  
</svg>
<!-- result -->
<div class="abs" style="left:5px;top:438px;width:388px;height:23px;background:#e3e3e3"></div>
<div class="abs" style="left:345px;top:438px;width:25px;height:23px;background:#eeeb9c"></div>
<div class="abs" style="left:370px;top:438px;width:23px;height:23px;background:#e2de7c"></div>
<svg class="abs" style="left:0;top:438px" width="397" height="23">
  <g stroke="#5a5a5a" stroke-width="1.8"><path d="M9.2 6.5 V18 M13 6.5 V18 M16.8 6.5 V18 M7.3 8.3 H18.6 M7.3 12.2 H18.6 M7.3 16.1 H18.6"/></g>
  <circle cx="355" cy="10.5" r="5" stroke="#4a4a3a" stroke-width="2" fill="none"/>
  <line x1="358.5" y1="14" x2="363" y2="18.5" stroke="#4a4a3a" stroke-width="2.4" stroke-linecap="round"/>
  <path d="M381.5 5.5 V18.5 M375 12 H388" stroke="#4a4a3a" stroke-width="2.6"/>
</svg>

<div class="abs" style="left:5px;top:461px;width:388px;height:73px;background:#fcef78"></div>
<svg class="abs" style="left:0;top:461px" width="397" height="73" viewBox="0 461 397 73">
  <g font-family="Liberation Sans" font-size="9.8" fill="#222">
    <text x="13" y="478.7" textLength="338" lengthAdjust="spacingAndGlyphs">Поземлен имот 61056.25.113, област Бургас, община Несебър, с. Равда, м.</text>
    <text x="13" y="489.9" textLength="364" lengthAdjust="spacingAndGlyphs">БЛАТО, вид собств. Частна, вид територия Урбанизирана, НТП Незастроен имот</text>
    <text x="13" y="501.2" textLength="306.7" lengthAdjust="spacingAndGlyphs">за жилищни нужди, площ 12003 кв.м., стар номер 025113, квартал 0,</text>
    <text x="13" y="512.4" textLength="351.8" lengthAdjust="spacingAndGlyphs">Заповед за одобрение на КККР № <tspan font-weight="bold">РД-18-58/16.04.2008 г.</tspan> на ИЗПЪЛНИТЕЛЕН</text>
    <text x="13" y="523.4" textLength="93" lengthAdjust="spacingAndGlyphs">ДИРЕКТОР НА АГКК</text>
  </g>
</svg>


<div class="abs" style="left:0;top:575px;width:397px;height:102px;background:#5b5b5b"></div>
<svg class="abs" style="left:0;top:0" width="397" height="677" viewBox="0 0 397 677">
  <g font-family="Liberation Sans" font-weight="bold" fill="#555" font-size="10.2">
    <text x="5.5" y="266.9" textLength="34" lengthAdjust="spacingAndGlyphs">Област</text>
    <text x="133.4" y="266.9" textLength="38.2" lengthAdjust="spacingAndGlyphs">Община</text>
    <text x="261.2" y="266.9" textLength="76.4" lengthAdjust="spacingAndGlyphs">Населено място</text>
    <text x="5.2" y="317" textLength="223" lengthAdjust="spacingAndGlyphs">екатте ИЛИ екатте • район • имот • сграда • сос</text>
    <text x="25.7" y="367.8" textLength="118.5" lengthAdjust="spacingAndGlyphs">Текущ изглед на картата</text>
    <text x="25.7" y="388.6" textLength="109.5" lengthAdjust="spacingAndGlyphs">Първите 200 резултата</text>
    <text x="306.7" y="377.2" textLength="33.4" lengthAdjust="spacingAndGlyphs" fill="#d8f5e4" font-size="9.9">ТЪРСИ</text>
  </g>
  <g font-family="Liberation Sans" fill="#555" font-size="10.2">
    <text x="9" y="291.2" textLength="42" lengthAdjust="spacingAndGlyphs">Изберете</text>
    <text x="137" y="291.2" textLength="42" lengthAdjust="spacingAndGlyphs" fill="#aaa">Изберете</text>
    <text x="265" y="291.2" textLength="42" lengthAdjust="spacingAndGlyphs" fill="#aaa">Изберете</text>
    <text x="10.8" y="340.8" textLength="63" lengthAdjust="spacingAndGlyphs" font-size="10.6">61056.25.113</text>
    <text x="298.8" y="423.8" textLength="31.5" lengthAdjust="spacingAndGlyphs">Всички</text>
    <text x="23.5" y="453" textLength="142.5" lengthAdjust="spacingAndGlyphs" font-size="10.6">Поземлен имот 61056.25.113</text>
    <text x="337.2" y="557.6" textLength="32.5" lengthAdjust="spacingAndGlyphs" font-size="9.8">1 - 1 / 1</text>
  </g>
  <text x="17.9" y="558.3" font-family="Liberation Serif" font-size="15.5" fill="#444">1</text>
</svg>


<!-- MAP -->
<div class="abs" style="left:397px;top:189px;width:8px;height:488px;background:linear-gradient(to right,#d9d9d9 0,#d9d9d9 3px,#d2dfe2 5px,#b5d5de 8px)"></div>
<svg class="abs" style="left:397px;top:430px" width="8" height="30"><path d="M6 2.5 L2 6 L6 9.5 Z M2 18.5 L6 22 L2 25.5 Z" fill="#f4f4f4"/></svg>
<svg class="abs" style="left:0;top:0" width="1151" height="677" viewBox="0 0 1151 677">
<defs>
  <clipPath id="parkclip"><path d="M681 527 L681 498 Q681 489 690 489 L704 489 Q709 490 709 497 L709 521 L722 521 Q732 518 743 518 L743 540 Q745 556 752 557 L790 554 L809.6 552.5 L795.7 646.5 L811.9 630.2 Q820 627 826 634 Q830 640 830.5 677 L636 677 L648 637 L660 600 L672 560 Z"/></clipPath>
  <clipPath id="mc"><rect x="405" y="189" width="746" height="488"/></clipPath>
  <pattern id="trees" width="22" height="20" patternUnits="userSpaceOnUse" x="3" y="5">
    <path d="M5 8 Q5 5 7 5 Q9 5 9 8 M7 8 V11" stroke="#9cc08c" stroke-width="0.8" fill="none"/>
    <path d="M16 18 Q16 15 18 15 Q20 15 20 18 M18 18 V21" stroke="#9cc08c" stroke-width="0.8" fill="none"/>
  </pattern>
</defs>
<g clip-path="url(#mc)">
  <rect x="405" y="189" width="746" height="488" fill="#f2efe9"/>
  <!-- water -->
  <path d="M405 185 H662 L650 229 L628 309 L608 389.4 L603 410 L593.9 450 L587.8 480 L558.6 600 L545.5 637 L529.5 677 L527 680 H405 Z" fill="#aad3df"/>
  <path d="M662 185 L650 229 L628 309 L608 389.4 L603 410 L593.9 450 L587.8 480 L558.6 600 L545.5 637 L529.5 677" stroke="#f6f4f0" stroke-width="3" fill="none" transform="translate(2.5,0)"/>
  <!-- park -->
  <path d="M681 527 L681 498 Q681 489 690 489 L704 489 Q709 490 709 497 L709 521 L722 521 Q732 518 743 518 L743 540 Q745 556 752 557 L790 554 L809.6 552.5 L795.7 646.5 L811.9 630.2 Q820 627 826 634 Q830 640 830.5 677 L636 677 L648 637 L660 600 L672 560 Z" fill="#add19e"/>
  <rect x="630" y="485" width="210" height="192" fill="url(#trees)" clip-path="url(#parkclip)"/>
  <!-- purple zone -->
  <path d="M851 680 L871 619 Q875 607 889 607 L1151 677 L1151 680 Z" fill="#e6d9e8"/>
  <!-- orange road -->
  <path d="M725.5 185 L668.3 410 L608.7 637 L598 680 L609.5 680 L619.9 637 L679.4 410 L704.5 320 L738.4 185 Z" fill="#fcd6a4"/>
  <g fill="none" stroke="#666" stroke-width="1">
    <polyline points="710.5,185 677,320 650.9,410 591.4,637 580,680"/>
    <polyline points="713.5,185 680,320 654.2,410 594.8,637 583.5,680"/>
    <polyline points="738.5,185 705,320 680.8,410 620.6,637 610,680"/>
    <polyline points="742.5,185 709.6,320 683.6,410 622.7,637 612.8,680"/>
    <polyline points="750.2,185 711.2,346.2 703.3,368 694.9,396 686,424 678,452.3 671,480.4 665.4,508.4 662.6,524.6 631,637 621,680"/>
  </g>
  <polyline points="695.2,185 634.2,410 573.3,637 560,680" fill="none" stroke="#55c040" stroke-width="0.9"/>
  <!-- parcel 113 -->
  <path d="M711.2 346.2 L817.6 350.8 L794.5 529.3 L662.6 524.6 L665.4 508.4 L671 480.4 L678 452.3 L686 424 L694.9 396 L703.3 368 Z" fill="#2020a0" fill-opacity="0.22"/>
  <path d="M711.2 346.2 L817.6 350.8 L794.5 529.3 L662.6 524.6 L665.4 508.4 L671 480.4 L678 452.3 L686 424 L694.9 396 L703.3 368 Z" fill="none" stroke="#1414c8" stroke-width="2"/>
  <!-- parcel lines west block -->
  <g fill="none" stroke="#666" stroke-width="1.1">
    <polyline points="838,185 816.6,349.6 794.5,529.3 788.7,581.5 781.8,631.4 767,680"/>
    <line x1="747.8" y1="200.2" x2="837" y2="203.3"/>
    <line x1="728.6" y1="276.2" x2="826.3" y2="281"/>
    <line x1="720.3" y1="312.4" x2="821.5" y2="316.2"/>
    <line x1="649.5" y1="576.3" x2="788" y2="582.4"/>
    <line x1="640" y1="626.8" x2="782.3" y2="631.7"/>
    <line x1="622" y1="674.5" x2="776" y2="677"/>
  </g>
  <!-- dotted/dashed east of parcels -->
  <polyline points="861.5,189 845,308 830,425 824,470 818,530 809,600 795,660 790,680" fill="none" stroke="#d4a26a" stroke-width="0.9" stroke-dasharray="2 2"/>
  <polyline points="889,185 878,309 866,425 831.6,677" fill="none" stroke="#8a8a8a" stroke-width="1.6" stroke-dasharray="9 3 1.5 3"/>
  <polyline points="902.2,185 886,309 870,425 841,677" fill="none" stroke="#aad3df" stroke-width="7"/>
  <polyline points="925,189 910,309 900,425 887,480 855,677" fill="none" stroke="#e8a8a8" stroke-width="0.9" stroke-dasharray="1.5 2"/>
  <!-- east blocks -->
  <g fill="none" stroke="#6a6a6a" stroke-width="1.2" stroke-linejoin="round">
    <polyline points="929,185 913,320 892,480 872.6,620 864,680"/>
    <path d="M942.5 185 L941 195 Q940.5 201 948.3 203.6 L1029.6 211.9 Q1034 212 1039 205.3 L1042.5 185"/>
    
    <path d="M941 222 Q941 213 948.3 211.9 L978.5 215 Q986 217 984.8 224 L971.7 348.4"/>
    <path d="M941 222 L927.3 322 Q926.5 330 932 333 L1104.5 391 Q1111 393 1114 386 L1122.2 320 L1127 280"/>
    <path d="M984.8 228.6 L1127.5 274.4"/>
    <path d="M978.5 295.7 L1117.5 342.4"/>
    <path d="M1079.6 260.9 L1071.3 326.5"/>
    <path d="M1049.4 185 L1045.2 228 Q1045 238 1052 242 L1127.5 267.1"/>
    <path d="M1047.3 218.2 L1129.6 245.3"/>
    <path d="M1096.3 185 L1090.4 231.7"/>
    <path d="M1098.3 189.5 L1135.8 192"/>
    <path d="M1137.5 185 L1120.2 330 L1114 386"/>
    <path d="M1115 262.5 L1117 250.5 L1129.6 251"/>
    <path d="M1151 257.8 L1142 330 L1135.2 391 Q1135 402 1142 405 L1151 408"/>
    <path d="M1137.6 347.2 L1151 352"/>
    <path d="M1138.7 374.3 L1151 379"/>
    <path d="M922.5 366 Q923 355 930.8 353.1 L1104 410 Q1111 413 1110.4 421 L1101 480 L1082.4 620 L1076 680"/>
    <path d="M922.5 366 L880.5 655 Q880 662 888 664 L925 677"/>
    <path d="M1037.1 389.7 L1020.5 506.8"/>
    <path d="M1065.5 405 L1055.9 473.9"/>
    <path d="M1032.4 427.5 L1105.7 439.3"/>
    <path d="M1060.8 450 L1102 464.1"/>
    <path d="M913 427.5 L1060 476"/>
    <path d="M908 470.1 L1020.5 506.8"/>
    <path d="M1026.8 460 L1020.5 506.8"/>
    <path d="M973.8 492.9 L957.3 620 L949.5 680"/>
    <path d="M894.1 564.9 L959.8 586.4"/>
    <path d="M988.9 513.1 Q980 514 978.8 524 L964.9 620 L957.6 680"/>
    <path d="M988.9 513.1 L1087 544.5 Q1092 547 1091.3 552 L1082.4 620"/>
    <path d="M1040.7 471.4 L1034.4 513.1 Q1034 518 1038.2 519.4 L1088 535.5 Q1093 536.5 1093.5 530 L1103.9 460"/>
    <path d="M1040.7 471.4 L1100.1 489.8"/>
    <path d="M999 516.9 L995.2 559.8"/>
    <path d="M1047.1 532 L1040.7 575"/>
    <path d="M975 553.5 L1086.2 590.2"/>
    <path d="M1126.7 460 L1105.2 620 L1098 680"/>
    <path d="M1129.2 455 L1151 463"/>
    <path d="M1132.8 430 Q1133 423 1140 423 L1151 427"/>
    <path d="M1132.8 430 L1126.7 460"/>
    <path d="M1119.1 524.5 L1151 535"/>
    <path d="M1117.8 533.3 L1151 545"/>
    <path d="M1110.3 595.2 L1151 611"/>
    <path d="M888.6 603 L954.9 623.2"/>
    <path d="M964.3 635.4 L1075 657 L1151 680"/>
    <path d="M933.2 617.8 L925.1 680"/>
    <path d="M958.9 663.8 L1002 677"/>
    <path d="M1009 650.3 L1004.9 680"/>
    <path d="M1030.5 657 L1029.2 680"/>
    <path d="M1099.5 659.7 L1151 676"/>
    
  </g>
  <g fill="none" stroke="#999" stroke-width="1" stroke-dasharray="2 1.5">
    <path d="M913 327 L926 329.5 L922.5 356.6"/>
    <path d="M1104.5 394.4 L1140 405"/>
    <path d="M1109.2 413.3 L1132 421.6"/>
    <path d="M941 199 L941 213"/>
  </g>
  <path d="M875 611 Q885 601 907.6 601.6 L961.6 616.5 L1015.7 636.8 Q1020 645 1018 680 M1029 647.6 L1110.3 666.5" fill="none" stroke="#d4a26a" stroke-width="1" stroke-dasharray="3 2"/>
  <!-- labels -->
  <g font-family="Liberation Serif" font-weight="bold" font-size="10.5" fill="#111" text-anchor="middle">
    <text x="457" y="415">100</text>
    <text x="612" y="573">102</text>
    <text x="794.8" y="234">11</text>
    <text x="784.7" y="290">21</text>
    <text x="778.2" y="325">22</text>
    <text x="759.2" y="435">113</text>
    <text x="812.3" y="503.5">104</text>
    <text x="734.8" y="547">16</text>
    <text x="724.6" y="598">17</text>
    <text x="712.8" y="647">18</text>
    <text x="887" y="424">310</text>
    <text x="970.8" y="271">452</text>
    <text x="1043.1" y="271">451</text>
    <text x="1113.5" y="295">450</text>
    <text x="1128.5" y="208.5">579</text>
    <text x="1059.1" y="339.5">453</text>
    <text x="983.5" y="402">2</text>
    <text x="1060.8" y="406.5">22</text>
    <text x="1054.9" y="445">21</text>
    <text x="975.2" y="460.5">3</text>
    <text x="942.7" y="522">4</text>
    <text x="999" y="529.5">15</text>
    <text x="1032.6" y="539.5">16</text>
    <text x="1078.7" y="555">17</text>
    <text x="1078.7" y="498">18</text>
    <text x="933.3" y="588.5">5</text>
    <text x="1037" y="606.5">14</text>
    <text x="1103.5" y="631">24</text>
    <text x="915.1" y="634.5">6</text>
    <text x="948.9" y="645.5">7</text>
    <text x="880" y="651.5">8</text>
    <text x="995.4" y="650">10</text>
    <text x="988.1" y="677">9</text>
    <text x="1026.5" y="674.5">11</text>
    <text x="1063" y="671.5">13</text>
  </g>
  <g font-family="Liberation Serif" font-size="10" fill="#222">
    <text x="873.4" y="197" text-anchor="middle" font-weight="bold">3.200</text>
    <text x="896" y="375">207</text>
    <text x="898" y="387">3.625</text>
    <text x="1117" y="670">205</text>
    <text x="659" y="446" font-weight="bold" letter-spacing="-0.5">ПИ012</text>
    <text x="659" y="459">1.734</text>
    <text x="667" y="472">18</text>
  </g>
  <line x1="893" y1="377" x2="920" y2="377" stroke="#222" stroke-width="1"/>
  <circle cx="892.3" cy="375.5" r="3.6" fill="#fff" stroke="#111" stroke-width="1.2"/><path d="M892.3 371.9 A3.6 3.6 0 0 0 892.3 379.1 Z" fill="#111"/>
  <line x1="656" y1="448" x2="690" y2="448" stroke="#222" stroke-width="1"/><path d="M662 467 L665.5 470.5 L662 474 L658.5 470.5 Z" fill="none" stroke="#444" stroke-width="0.8"/>
  <circle cx="655.5" cy="447.5" r="3.6" fill="#fff" stroke="#111" stroke-width="1.2"/><path d="M655.5 443.9 A3.6 3.6 0 0 0 655.5 451.1 Z" fill="#111"/>
  <line x1="1117" y1="672" x2="1140" y2="672" stroke="#222" stroke-width="1"/>
  <circle cx="1116" cy="670" r="3.6" fill="#fff" stroke="#111" stroke-width="1.2"/><path d="M1116.0 666.4 A3.6 3.6 0 0 0 1116.0 673.6 Z" fill="#111"/>
  <path d="M622 601 L626 601 L626 613 L618 613 L618 601 Z" fill="#f4f1e8" stroke="#c8bfa8" stroke-width="0.6"/>
  <text x="622" y="610.5" font-size="7" fill="#666" text-anchor="middle" font-family="Liberation Sans">9</text>
  <path d="M855 190 H866" stroke="#111" stroke-width="1.2"/>
  <text transform="translate(991,228) rotate(-84)" font-size="6.5" fill="#444" font-family="Liberation Sans" letter-spacing="0.3">улица Ер-Не</text>
  <text transform="translate(882,352) rotate(-82)" font-size="6" fill="#5a9ab0" font-family="Liberation Sans">Бързорист</text>
  <text transform="translate(853,620) rotate(-78)" font-size="6" fill="#5a9ab0" font-family="Liberation Sans">Бързорист</text>
</g>
</svg>

</body></html>
